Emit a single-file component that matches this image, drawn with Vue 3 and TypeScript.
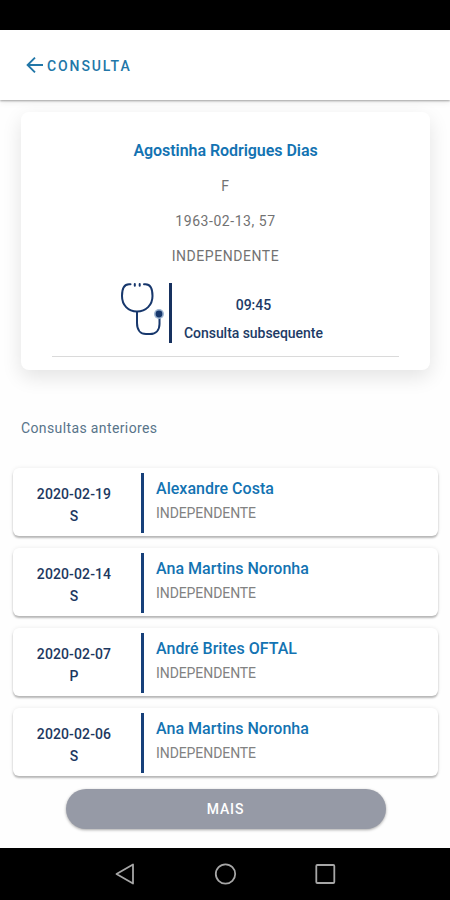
<script setup lang="ts">
interface Visit {
  date: string
  kind: string
  name: string
  plan: string
}

const visits: Visit[] = [
  { date: '2020-02-19', kind: 'S', name: 'Alexandre Costa', plan: 'INDEPENDENTE' },
  { date: '2020-02-14', kind: 'S', name: 'Ana Martins Noronha', plan: 'INDEPENDENTE' },
  { date: '2020-02-07', kind: 'P', name: 'André Brites OFTAL', plan: 'INDEPENDENTE' },
  { date: '2020-02-06', kind: 'S', name: 'Ana Martins Noronha', plan: 'INDEPENDENTE' },
]
</script>

<template>
  <div class="screen">
    <div class="status"></div>
    <header class="header">
      <svg class="back" width="18" height="18" viewBox="0 0 18 18" fill="none" stroke="currentColor" stroke-width="1.9">
        <path d="M17 9H2M9 1.6L1.6 9L9 16.4" />
      </svg>
      <span class="title">CONSULTA</span>
    </header>
    <main class="content">
      <section class="patient">
        <h1 class="name">Agostinha Rodrigues Dias</h1>
        <p class="line">F</p>
        <p class="line">1963-02-13, 57</p>
        <p class="line">INDEPENDENTE</p>
        <div class="appointment">
          <svg class="steth" width="46" height="56" viewBox="0 0 46 56" fill="none" stroke="#17376c" stroke-width="2" stroke-linecap="round">
            <path d="M10.500 1.300H9C4.500 1.300 2 6 2 13C2 22 8 28.500 17 28.500C26 28.500 32.500 22 32.500 13C32.500 6 30 1.300 25.500 1.300H24" />
            <path d="M14.800 1V2.800M19.700 1V2.800" />
            <path d="M17 29V40C17 47 20.500 51 26 51H30C36 51 39.500 47 39.500 41V35" />
            <circle cx="39" cy="31" r="5" fill="#9db4d0" stroke="none" />
            <circle cx="39" cy="31" r="3.400" fill="#17376c" stroke="none" />
          </svg>
          <div class="slot">
            <span>09:45</span>
            <span class="type">Consulta subsequente</span>
          </div>
        </div>
        <div class="rule"></div>
      </section>
      <h2 class="subtitle">Consultas anteriores</h2>
      <ul class="visits">
        <li v-for="v in visits" :key="v.date" class="visit">
          <div class="when">
            <span>{{ v.date }}</span>
            <span class="kind">{{ v.kind }}</span>
          </div>
          <div class="bar"></div>
          <div class="who">
            <span class="doctor">{{ v.name }}</span>
            <span class="plan">{{ v.plan }}</span>
          </div>
        </li>
      </ul>
      <button class="more" type="button">MAIS</button>
    </main>
    <nav class="nav">
      <svg width="24" height="24" viewBox="0 0 24 24"><path d="M20 2.500V21.500L3.500 12Z" /></svg>
      <svg width="24" height="24" viewBox="0 0 24 24"><circle cx="12.500" cy="12" r="9.700" /></svg>
      <svg width="24" height="24" viewBox="0 0 24 24"><rect x="3.300" y="3" width="18" height="18" rx="1" /></svg>
    </nav>
  </div>
</template>

<style>
body {
  margin: 0;
  background: #fefefe;
}
</style>

<style scoped>
.screen {
  display: flex;
  flex-direction: column;
  width: 450px;
  height: 900px;
  overflow: hidden;
  background: #fefefe;
  font-family: Roboto, "Liberation Sans", sans-serif;
}
.status {
  height: 30px;
  background: #000;
}
.header {
  display: flex;
  align-items: center;
  height: 70px;
  padding-left: 26px;
  box-sizing: border-box;
  color: #2277a8;
  background: #fff;
  box-shadow: 0 1px 2px rgba(0, 0, 0, 0.34), 0 3px 6px rgba(0, 0, 0, 0.06);
  z-index: 1;
}
.title {
  margin: 1px 0 0 3px;
  font-size: 14px;
  font-weight: 500;
  letter-spacing: 1.900px;
}
.content {
  flex: 1;
  display: flex;
  flex-direction: column;
}
.patient {
  display: flex;
  flex-direction: column;
  align-items: center;
  height: 258px;
  margin: 12px 20px 0 21px;
  padding-top: 27px;
  box-sizing: border-box;
  border-radius: 8px;
  background: #fff;
  box-shadow: 0 7px 20px rgba(0, 0, 0, 0.11);
}
.name {
  margin: 0;
  font-size: 16px;
  line-height: 24px;
  font-weight: 600;
  letter-spacing: -0.050px;
  color: #1373b2;
}
.line {
  margin: 11px 0 0;
  font-size: 14px;
  line-height: 24px;
  letter-spacing: 0.550px;
  color: #727272;
}
.appointment {
  display: flex;
  align-self: stretch;
  margin-top: 15px;
  padding-left: 99px;
}
.steth {
  margin-right: 3px;
}
.slot {
  display: flex;
  flex-direction: column;
  align-items: center;
  height: 60px;
  padding: 12px 0 0 12px;
  box-sizing: border-box;
  border-left: 3px solid #17315f;
  font-size: 14px;
  line-height: 20px;
  font-weight: 500;
  letter-spacing: -0.050px;
  color: #1d3b66;
}
.type {
  margin-top: 8px;
}
.rule {
  align-self: stretch;
  height: 1px;
  margin: 13px 31px 0;
  background: #dadada;
}
.subtitle {
  margin: 48px 0 0 21px;
  font-size: 14px;
  line-height: 20px;
  font-weight: 400;
  letter-spacing: 0.380px;
  color: #58748a;
}
.visits {
  display: flex;
  flex-direction: column;
  gap: 12px;
  margin: 30px 12px 0 13px;
  padding: 0;
  list-style: none;
}
.visit {
  display: flex;
  height: 68px;
  border-radius: 6px;
  background: #fff;
  box-shadow: 0 2px 2px rgba(0, 0, 0, 0.26), 0 0 4px rgba(0, 0, 0, 0.08);
}
.when {
  display: flex;
  flex-direction: column;
  align-items: center;
  width: 122px;
  padding: 15px 0 0;
  box-sizing: border-box;
  font-size: 14px;
  line-height: 22px;
  font-weight: 500;
  letter-spacing: 0.120px;
  color: #1d3860;
}
.bar {
  width: 3px;
  height: 60px;
  margin: 5px 0 0 6px;
  background: #17407a;
}
.who {
  display: flex;
  flex-direction: column;
  padding: 9px 0 0 12px;
  line-height: 24px;
}
.doctor {
  font-size: 16px;
  font-weight: 500;
  letter-spacing: 0.020px;
  color: #1373b2;
}
.plan {
  font-size: 14px;
  letter-spacing: -0.080px;
  color: #828282;
}
.more {
  width: 320px;
  height: 40px;
  margin: 13px 0 0 65.500px;
  padding: 0;
  border: 0;
  border-radius: 20px;
  background: #969aa6;
  box-shadow: 0 1px 3px rgba(0, 0, 0, 0.35);
  color: #fff;
  font-family: inherit;
  font-size: 14px;
  font-weight: 500;
  letter-spacing: 0.900px;
}
.nav {
  display: flex;
  justify-content: center;
  align-items: center;
  gap: 76px;
  height: 52px;
  background: #000;
}
.nav svg {
  fill: none;
  stroke: #a6a6a6;
  stroke-width: 1.800;
  stroke-linejoin: round;
}
</style>
